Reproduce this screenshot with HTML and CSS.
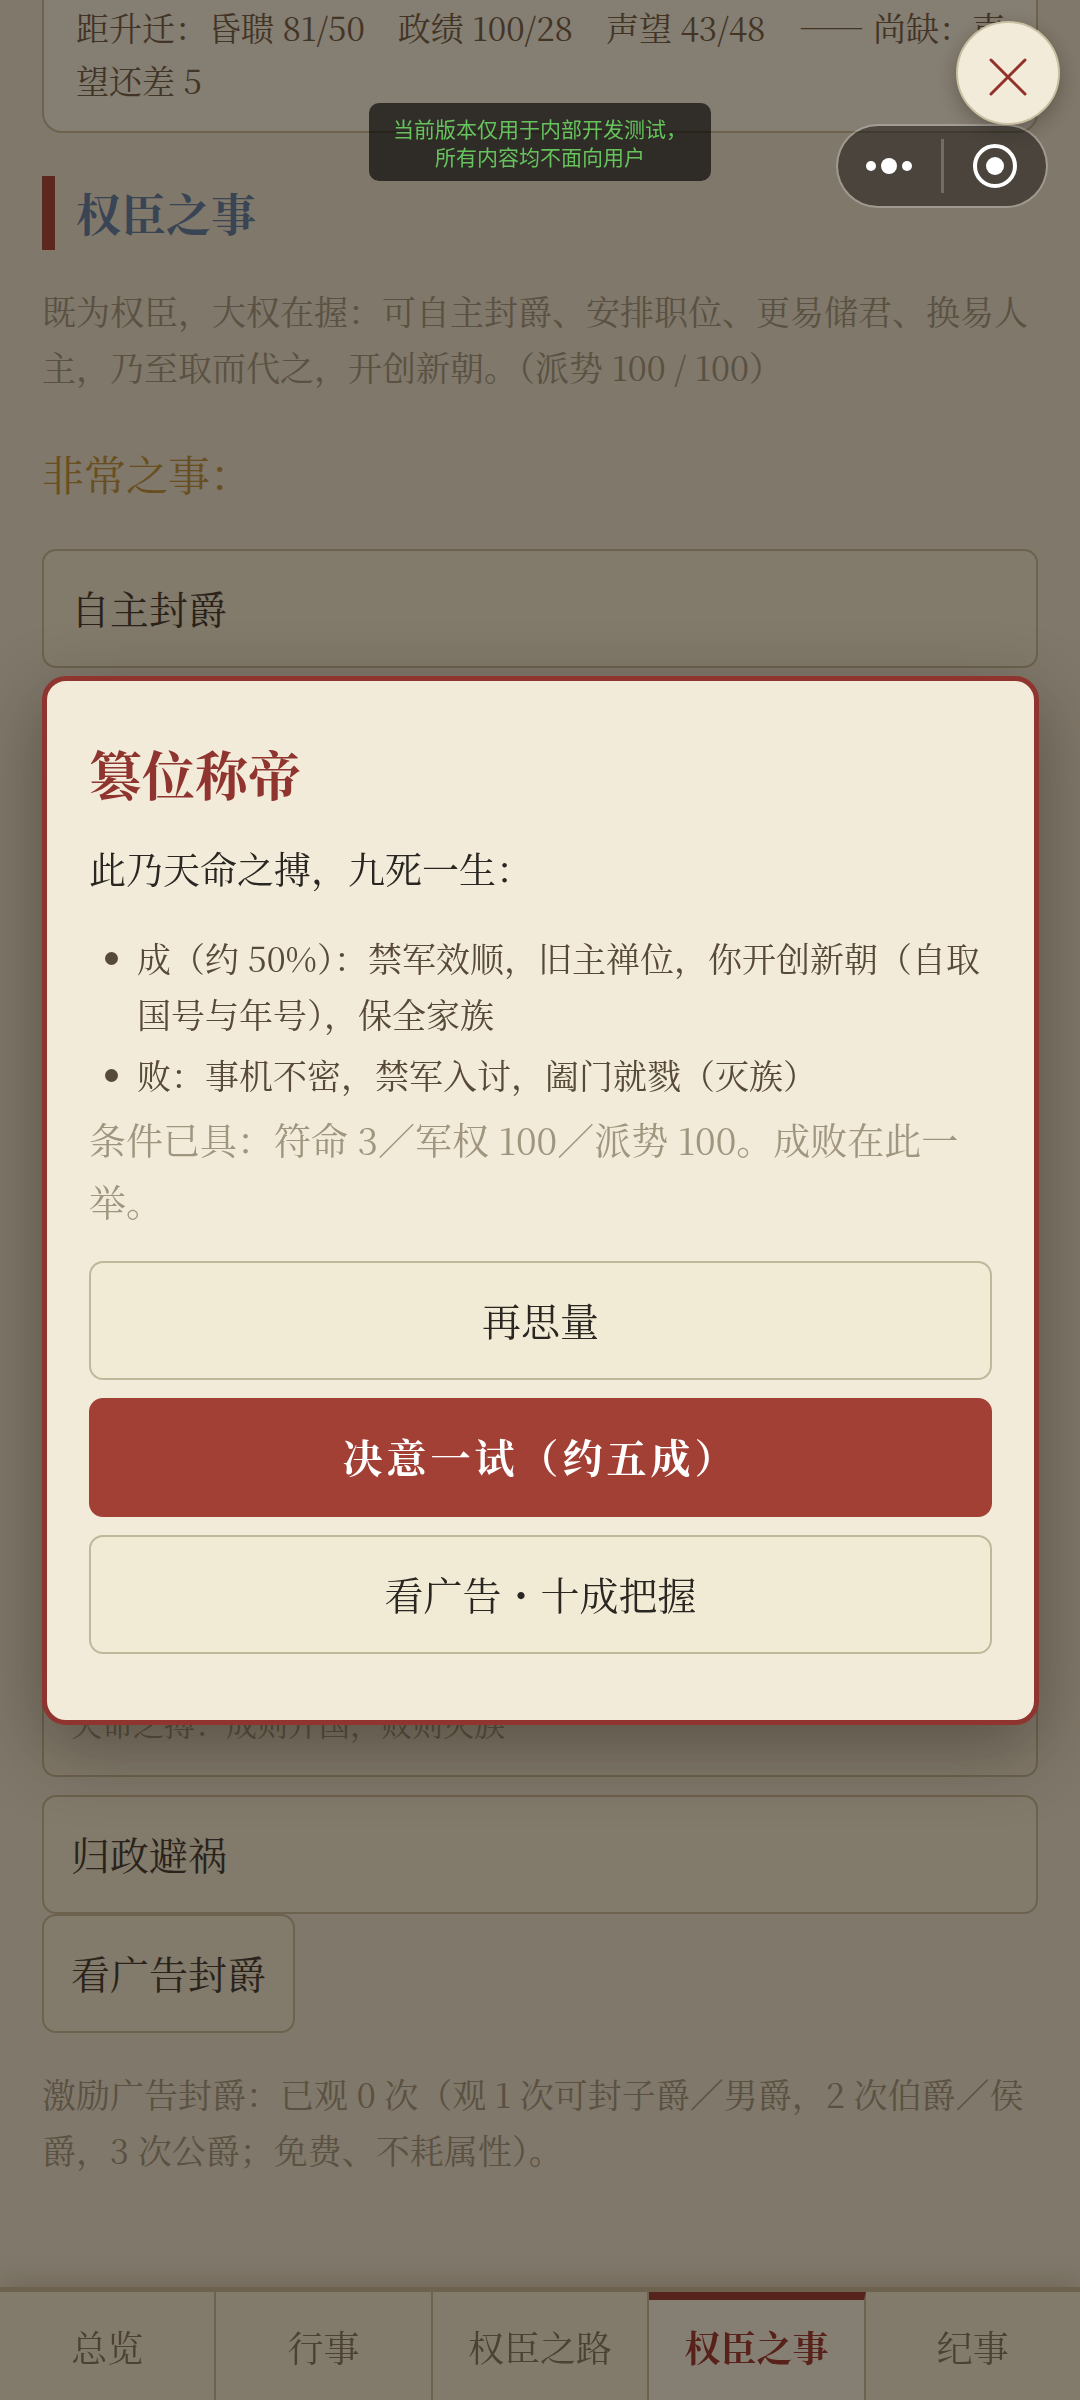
FILE: index.html
```html
<!DOCTYPE html>
<html lang="zh-CN">
<head>
    <meta charset="UTF-8">
    <meta name="viewport" content="width=device-width, initial-scale=1">
    <title>权臣之事</title>
    <link rel="stylesheet" href="styles.css">
</head>
<body>

<main class="page">
    <section class="status">
        距升迁：昏聩 81/50　政绩 100/28　声望 43/48　—— 尚缺：声望还差 5
    </section>

    <h2 class="section-title">权臣之事</h2>
    <p class="note">既为权臣，大权在握：可自主封爵、安排职位、更易储君、换易人主，乃至取而代之，开创新朝。（派势 100 / 100）</p>

    <h3 class="sub-title">非常之事：</h3>
    <div class="actions">
        <button type="button" class="btn">自主封爵</button>
        <button type="button" class="btn btn-detail"><small>天命之搏：成则开国，败则灭族</small></button>
        <button type="button" class="btn">归政避祸</button>
    </div>
    <button type="button" class="btn">看广告封爵</button>
    <p class="note note-ad">激励广告封爵：已观 0 次（观 1 次可封子爵／男爵，2 次伯爵／侯爵，3 次公爵；免费、不耗属性）。</p>
</main>

<nav class="tabs">
    <a href="#">总览</a>
    <a href="#">行事</a>
    <a href="#">权臣之路</a>
    <a href="#" class="active">权臣之事</a>
    <a href="#">纪事</a>
</nav>

<div class="mask">
    <div class="dialog" role="dialog" aria-labelledby="dialog-title">
        <h1 id="dialog-title">篡位称帝</h1>
        <p class="lead">此乃天命之搏，九死一生：</p>
        <ul>
            <li>成（约 50%）：禁军效顺，旧主禅位，你开创新朝（自取国号与年号），保全家族</li>
            <li>败：事机不密，禁军入讨，阖门就戮（灭族）</li>
        </ul>
        <p class="cond">条件已具：符命 3／军权 100／派势 100。成败在此一举。</p>
        <div class="choices">
            <button type="button" class="btn">再思量</button>
            <button type="button" class="btn btn-danger">决意一试（约五成）</button>
            <button type="button" class="btn">看广告・十成把握</button>
        </div>
    </div>
</div>

<!-- floating things of the mini program shell -->
<div class="toast">当前版本仅用于内部开发测试，<br>所有内容均不面向用户</div>

<div class="capsule">
    <button type="button" aria-label="更多">
        <svg width="46" height="46" viewBox="0 0 46 46" fill="#fff">
            <circle cx="5" cy="23" r="5"/>
            <circle cx="23" cy="23" r="8"/>
            <circle cx="41" cy="23" r="5"/>
        </svg>
    </button>
    <button type="button" aria-label="退出">
        <svg width="46" height="46" viewBox="0 0 46 46">
            <circle cx="23" cy="23" r="20" fill="none" stroke="#fff" stroke-width="4"/>
            <circle cx="23" cy="23" r="9" fill="#fff"/>
        </svg>
    </button>
</div>

<button type="button" class="close" aria-label="关闭">
    <svg width="40" height="40" viewBox="0 0 40 40" stroke="#93302a" stroke-width="3" stroke-linecap="round">
        <path d="M3 3 L37 37 M37 3 L3 37"/>
    </svg>
</button>

</body>
</html>
```

FILE: styles.css
```css
* {
    box-sizing: border-box;
}

body {
    margin: 0;
    min-height: 100vh;
    background: #ece2cc;
    color: #42382e;
    font-family: "Noto Serif CJK SC", "Noto Serif SC", "Liberation Serif", "Noto Sans CJK SC", serif;
}

h1, h2, h3, p, ul {
    margin: 0;
    padding: 0;
}

button {
    font-family: inherit;
    color: inherit;
    margin: 0;
}

.page {
    padding: 0 42px 140px;
}

.status {
    padding: 0 20px 25px 32px;
    border: 2px solid #c4b694;
    border-top: 0;
    border-radius: 0 0 20px 20px;
    background: #f6eedc;
    color: #725c44;
    font-size: 33px;
    line-height: 53px;
}

.section-title {
    margin-top: 43px;
    padding-left: 21px;
    border-left: 13px solid #a44036;
    color: #5e7aa0;
    font-size: 45px;
    line-height: 74px;
}

.note {
    margin-top: 33px;
    padding-bottom: 2px;
    color: #a0947c;
    font-size: 34px;
    line-height: 56px;
}

.sub-title {
    margin-top: 42px;
    color: #be9038;
    font-size: 42px;
    font-weight: normal;
    line-height: 68px;
}

.btn {
    min-height: 119px;
    padding: 0 27px 3px;
    border: 2px solid #c4b694;
    border-radius: 14px;
    background: #f0e6ce;
    font-size: 39px;
    line-height: 60px;
}

.actions {
    display: flex;
    flex-direction: column;
    gap: 18px;
    margin-top: 42px;
}

.actions .btn {
    text-align: left;
}

/* pushed down, sits half behind the dialog */
.actions .btn-detail {
    display: flex;
    align-items: flex-end;
    min-height: 164px;
    margin-top: 927px;
    padding-bottom: 27px;
}

.btn-detail small {
    color: #a0947c;
    font-size: 31px;
    line-height: 50px;
}

.tabs {
    position: fixed;
    left: 0;
    right: 0;
    bottom: 0;
    display: flex;
    height: 113px;
    border-top: 5px solid #c4b694;
    background: #f0e6ce;
    box-shadow: 0 -6px 24px rgba(90, 70, 40, 0.2);
}

.tabs a {
    flex: 1;
    padding-top: 8px;
    border-right: 2px solid #c4b694;
    color: #847660;
    font-size: 36px;
    line-height: 94px;
    text-align: center;
    text-decoration: none;
}

.tabs a:last-child {
    border-right: 0;
}

.tabs .active {
    padding-top: 0;
    border-top: 8px solid #983a30;
    background: #f6eedc;
    color: #9c362c;
    font-weight: bold;
}

.mask {
    position: fixed;
    top: 0;
    right: 0;
    bottom: 0;
    left: 0;
    display: flex;
    align-items: center;
    padding: 0 41px 0 42px;
    background: rgba(20, 14, 8, 0.5);
}

.dialog {
    width: 100%;
    padding: 58px 42px 66px;
    border: 5px solid #8f342e;
    border-radius: 24px;
    background: #f2ebd9;
    box-shadow: 0 24px 72px rgba(30, 24, 16, 0.4);
}

.dialog h1 {
    color: #8f342e;
    font-size: 53px;
    line-height: 68px;
}

.lead, .cond {
    font-size: 37px;
    line-height: 62px;
}

.lead {
    margin-top: 30px;
    color: #2a2722;
}

.dialog ul {
    margin-top: 31px;
    list-style: none;
}

.dialog li {
    position: relative;
    margin-bottom: 5px;
    padding-left: 48px;
    color: #584a38;
    font-size: 34px;
    line-height: 56px;
}

.dialog li::before {
    content: "";
    position: absolute;
    left: 16px;
    top: 22px;
    width: 13px;
    height: 13px;
    border-radius: 50%;
    background: #584a38;
}

.cond {
    color: #a0967f;
}

.choices {
    display: flex;
    flex-direction: column;
    gap: 18px;
    margin-top: 29px;
}

.choices .btn {
    border-color: #c0b89a;
    background: #f1ead5;
    color: #2a2722;
}

.choices .btn-danger {
    border-color: #a34035;
    background: #a34035;
    color: #fff;
    font-size: 40px;
    font-weight: bold;
    letter-spacing: 4px;
}

.toast {
    position: fixed;
    top: 103px;
    left: 50%;
    transform: translateX(-50%);
    padding: 11px 24px;
    border-radius: 10px;
    background: rgba(0, 0, 0, 0.63);
    color: #66c25c;
    font-family: "Noto Sans CJK SC", sans-serif;
    font-size: 21px;
    line-height: 28px;
    text-align: center;
    white-space: nowrap;
}

.capsule {
    position: fixed;
    top: 124px;
    right: 32px;
    display: flex;
    align-items: center;
    width: 212px;
    height: 84px;
    border: 2px solid rgba(255, 255, 255, 0.25);
    border-radius: 42px;
    background: rgba(20, 18, 16, 0.5);
    background-clip: padding-box;
}

.capsule button {
    display: flex;
    flex: 1;
    align-items: center;
    justify-content: center;
    height: 54px;
    padding: 0;
    border: 0;
    background: none;
}

.capsule button + button {
    border-left: 3px solid rgba(255, 255, 255, 0.22);
}

.close {
    position: fixed;
    top: 21px;
    right: 20px;
    display: flex;
    align-items: center;
    justify-content: center;
    width: 104px;
    height: 104px;
    padding: 8px 0 0;
    border: 2px solid #c9c0a2;
    border-radius: 50%;
    background: #f2ebd9;
    box-shadow: 0 6px 18px rgba(30, 24, 16, 0.3);
}
```
